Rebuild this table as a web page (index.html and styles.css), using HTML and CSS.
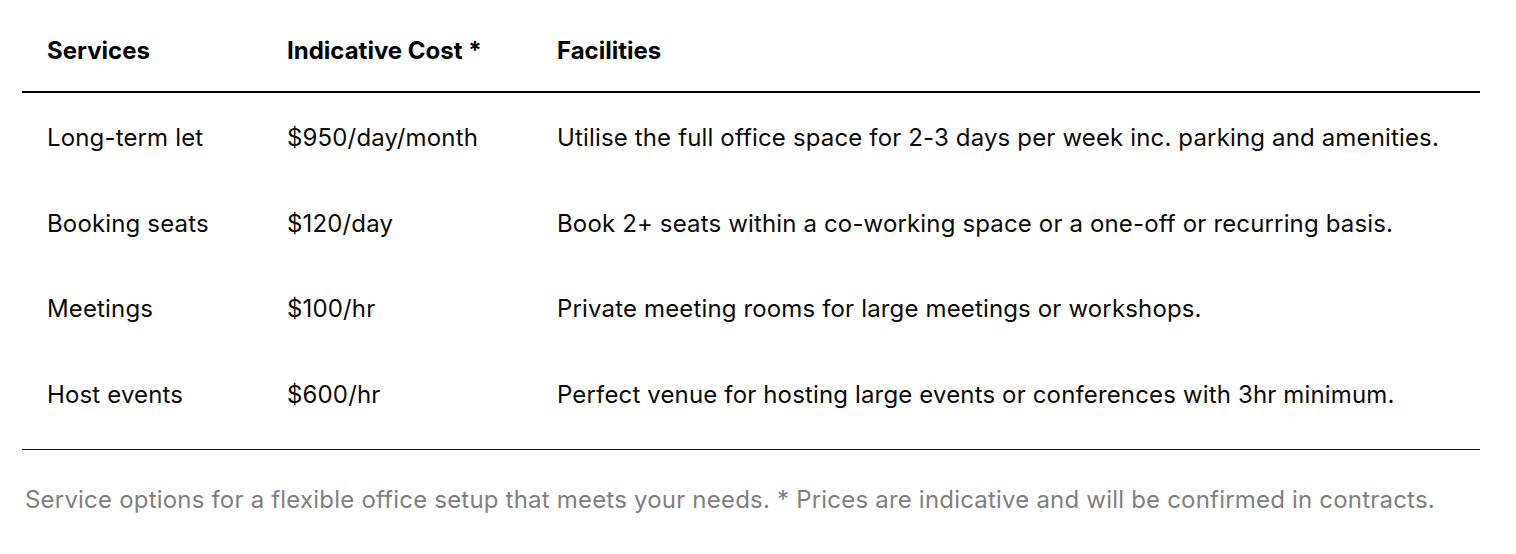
FILE: index.html
```html
<!DOCTYPE html>
<html lang="en">
<head>
<meta charset="utf-8">
<title>Services</title>
<link rel="stylesheet" href="styles.css">
</head>
<body>
<div class="wrap">
  <table class="services">
    <thead>
      <tr>
        <th class="c1">Services</th>
        <th class="c2">Indicative Cost *</th>
        <th class="c3">Facilities</th>
      </tr>
    </thead>
    <tbody>
      <tr><td>Long-term let</td><td>$950/day/month</td><td>Utilise the full office space for 2-3 days per week inc. parking and amenities.</td></tr>
      <tr><td>Booking seats</td><td>$120/day</td><td>Book 2+ seats within a co-working space or a one-off or recurring basis.</td></tr>
      <tr><td>Meetings</td><td>$100/hr</td><td>Private meeting rooms for large meetings or workshops.</td></tr>
      <tr><td>Host events</td><td>$600/hr</td><td>Perfect venue for hosting large events or conferences with 3hr minimum.</td></tr>
    </tbody>
  </table>
  <p class="caption">Service options for a flexible office setup that meets your needs. * Prices are indicative and will be confirmed in contracts.</p>
</div>
</body>
</html>
```
FILE: styles.css
```css
html, body {
  margin: 0;
  padding: 0;
  background: #ffffff;
}
body {
  font-family: "Inter", "Noto Sans", sans-serif;
  color: #0a0a0a;
}
.wrap {
  padding: 0 36px 0 22px;
}
.services {
  width: 100%;
  border-collapse: collapse;
  font-size: 24px;
  line-height: 30px;
  letter-spacing: 0.15px;
  border-bottom: 1px solid #111;
}
.services thead tr {
  border-bottom: 2px solid #000;
}
.services th {
  text-align: left;
  font-weight: 700;
  letter-spacing: 0;
  color: #000;
  padding: 36px 23px 25px 25px;
}
.services th.c1 { width: 192px; }
.services th.c2 { width: 222px; }
.services td {
  padding: 30px 23px 25.7px 25px;
  vertical-align: middle;
}
.services tbody tr:last-child td {
  padding-bottom: 39px;
}
.caption {
  margin: 0;
  padding: 35px 0 0 3px;
  font-size: 24px;
  line-height: 30px;
  letter-spacing: 0.2px;
  color: #7f7f7f;
}
```
